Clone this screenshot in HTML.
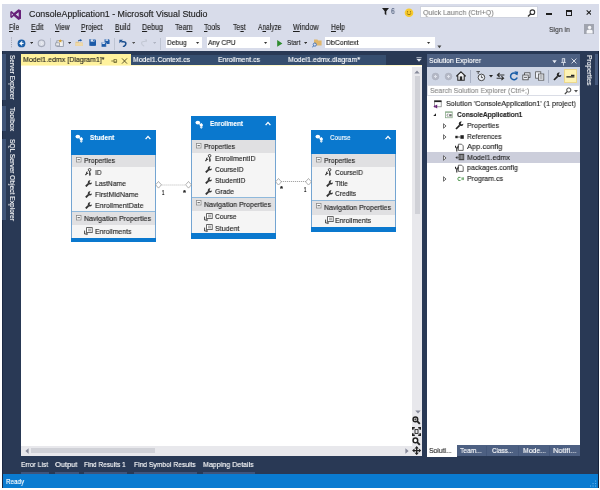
<!DOCTYPE html>
<html><head><meta charset="utf-8"><title>ConsoleApplication1 - Microsoft Visual Studio</title>
<style>
html,body{margin:0;padding:0;background:#fff;}
body{width:600px;height:490px;overflow:hidden;font-family:"Liberation Sans",sans-serif;}
#root{position:relative;width:600px;height:490px;overflow:hidden;background:#fff;}
#root div,#root svg{position:absolute;box-sizing:border-box;}
.t{will-change:transform;-webkit-text-stroke:0.14px;position:absolute;white-space:nowrap;transform-origin:0 50%;font-family:"Liberation Sans",sans-serif;}
.u{text-decoration:underline;}

</style></head>
<body>
<div id="root">
<!-- window chrome -->
<div style="left:2px;top:4px;width:596.5px;height:47px;background:#d8dcea"></div>
<div style="left:2px;top:50.8px;width:596.5px;height:424px;background:#293955"></div>
<div style="left:2px;top:474.2px;width:596.5px;height:14.3px;background:#0a7bd0"></div>

<div style="left:597.8px;top:50.8px;width:0.7px;height:437.7px;background:#17233b"></div>
<div style="left:2px;top:50.8px;width:0.5px;height:437.7px;background:#1b2944"></div>
<!-- VS logo -->
<svg style="left:9.6px;top:8.7px" width="11.9" height="11.1" viewBox="0 0 14 13"><path d="M10 0.2 L13.7 1.8 V11.2 L10 12.8 L4.5 8.2 L1.9 10.6 L0.3 9.8 V3.2 L1.9 2.4 L4.5 4.8 Z M10.2 3.9 L6.8 6.5 L10.2 9.1 Z M2 4.9 V8.1 L3.7 6.5 Z" fill="#68217a" fill-rule="evenodd"/></svg>

<!-- title right: filter, smiley, quick launch, window buttons -->
<svg style="left:381.7px;top:8.3px" width="8" height="8" viewBox="0 0 8 8"><path d="M0 0 H7 L4.3 3.2 V7.2 L2.7 6 V3.2 Z" fill="#1e1e1e"/></svg>
<svg style="left:403.5px;top:7.5px" width="10" height="10" viewBox="0 0 10 10"><circle cx="5" cy="4.8" r="4.3" fill="#f7ca2e"/><circle cx="3.5" cy="3.8" r="0.6" fill="#7a5b00"/><circle cx="6.5" cy="3.8" r="0.6" fill="#7a5b00"/><path d="M2.8 5.6 Q5 8 7.2 5.6" stroke="#7a5b00" stroke-width="0.7" fill="none"/></svg>
<div style="left:419.5px;top:6px;width:118.3px;height:11.8px;background:#fff;border:0.5px solid #cfd3df"></div>
<svg style="left:527px;top:8.5px" width="9" height="9" viewBox="0 0 9 9"><circle cx="5.4" cy="3.2" r="2.3" stroke="#333" stroke-width="1.1" fill="none"/><path d="M3.8 4.8 L1 7.6" stroke="#333" stroke-width="1.4"/></svg>
<div style="left:546px;top:13.3px;width:6px;height:1.8px;background:#1e1e1e"></div>
<div style="left:566.2px;top:9.5px;width:6.1px;height:6.2px;border:0.9px solid #1e1e1e;border-top-width:2.1px"></div>
<svg style="left:585.7px;top:10.4px" width="5.8" height="5" viewBox="0 0 7 6"><path d="M0.8 0.5 L6.2 5.5 M6.2 0.5 L0.8 5.5" stroke="#1e1e1e" stroke-width="1.3"/></svg>
<!-- avatar -->
<svg style="left:583.8px;top:24px" width="10" height="10" viewBox="0 0 10 10"><rect width="10" height="10" fill="#a0a4af"/><circle cx="5.6" cy="3.5" r="1.7" fill="#f4f5f8"/><path d="M2.6 9.5 V7.4 Q2.6 5.6 5.6 5.6 Q8.6 5.6 8.6 7.4 V9.5 Z" fill="#f4f5f8"/></svg>


<!-- toolbar -->
<svg style="left:9.8px;top:37.2px" width="3" height="12" viewBox="0 0 3 12"><g fill="#9aa0b0"><rect x="1" y="0.5" width="1" height="1"/><rect x="1" y="2.7" width="1" height="1"/><rect x="1" y="4.9" width="1" height="1"/><rect x="1" y="7.1" width="1" height="1"/><rect x="1" y="9.3" width="1" height="1"/></g></svg>
<svg style="left:17px;top:38.5px" width="9" height="9" viewBox="0 0 9 9"><circle cx="4.5" cy="4.4" r="3.9" fill="#1b5fa8"/><path d="M5.2 2.4 L3 4.4 L5.2 6.4 M3 4.4 H6.6" stroke="#fff" stroke-width="1.1" fill="none"/></svg>
<svg style="left:29.9px;top:41.8px" width="3.2" height="2.4" viewBox="0 0 4 3"><path d="M0 0 H4 L2 2.4 Z" fill="#333"/></svg>
<svg style="left:37px;top:38.8px" width="9" height="9" viewBox="0 0 9 9"><circle cx="4.5" cy="4.3" r="3.3" fill="#dcdfe8" stroke="#a4a9b8" stroke-width="1.1"/><path d="M4 2.8 L5.6 4.3 L4 5.8" stroke="#eef0f5" stroke-width="0.9" fill="none"/></svg>
<div style="left:50px;top:37.5px;width:1px;height:12px;background:#bec4d2"></div>
<!-- new project -->
<svg style="left:54.6px;top:38.6px" width="9.4" height="8.4" viewBox="0 0 10 10" preserveAspectRatio="none"><rect x="2" y="2.2" width="6.8" height="6.6" fill="#f2f2f2" stroke="#7f8797" stroke-width="0.8"/><rect x="0.8" y="4.6" width="4" height="3.6" fill="#e8e8e8" stroke="#7f8797" stroke-width="0.7"/><path d="M5.6 0.4 L6.3 1.6 L7.6 1.9 L6.6 2.8 L6.8 4.1 L5.6 3.5 L4.4 4.1 L4.6 2.8 L3.6 1.9 L4.9 1.6 Z" fill="#d9a531"/></svg>
<svg style="left:67.9px;top:41.8px" width="3.2" height="2.4" viewBox="0 0 4 3"><path d="M0 0 H4 L2 2.4 Z" fill="#333"/></svg>
<!-- open -->
<svg style="left:75.2px;top:38.6px" width="8.6" height="7.6" viewBox="0 0 10 11" preserveAspectRatio="none"><path d="M0.6 4 H4 L4.8 5 H9 V10 H0.6 Z" fill="#e3c58c"/><path d="M0.6 5.6 H9 V10 H0.6Z" fill="#efd9a8"/><path d="M3.4 3.2 Q3.6 1 6 1.2 V0 L8.4 1.9 L6 3.8 V2.6 Q4.6 2.4 4.6 3.4Z" fill="#1e5aa8"/></svg>
<!-- save -->
<svg style="left:88.8px;top:39.3px" width="7.4" height="7" viewBox="0 0 9 9" preserveAspectRatio="none"><path d="M0.4 0.4 H7.4 L8.6 1.6 V8.6 H0.4 Z" fill="#1d5ba8"/><rect x="2" y="0.4" width="4.6" height="3" fill="#dfe6f3"/><rect x="4.9" y="0.8" width="1" height="2" fill="#1d5ba8"/><rect x="1.8" y="5.4" width="5.4" height="3.2" fill="#1d5ba8"/></svg>
<!-- save all -->
<svg style="left:101px;top:38.6px" width="8.9" height="8.4" viewBox="0 0 11 11" preserveAspectRatio="none"><path d="M4.4 0.4 H9.6 L10.6 1.4 V6.6 H4.4 Z" fill="#1d5ba8"/><rect x="5.6" y="0.4" width="3.2" height="2" fill="#dfe6f3"/><path d="M0.4 4.4 H5.6 L6.6 5.4 V10.6 H0.4 Z" fill="#1d5ba8" stroke="#dde1ec" stroke-width="0.6"/><rect x="1.6" y="4.6" width="3.2" height="2" fill="#dfe6f3"/></svg>
<div style="left:114.4px;top:37.5px;width:1px;height:12px;background:#bec4d2"></div>
<!-- undo -->
<svg style="left:119.2px;top:38.8px" width="8.6" height="8.6" viewBox="0 0 10 10"><path d="M2.6 3.2 H5.2 Q8 3.2 8 5.6 Q8 7.6 4.6 9.2" stroke="#1b4f8f" stroke-width="1.8" fill="none"/><path d="M0.4 0.8 H4.6 L0.4 5 Z" fill="#1b4f8f"/></svg>
<svg style="left:132.2px;top:41.8px" width="3.2" height="2.4" viewBox="0 0 4 3"><path d="M0 0 H4 L2 2.4 Z" fill="#555"/></svg>
<!-- redo -->
<svg style="left:139.6px;top:39px" width="7.8" height="7.8" viewBox="0 0 10 10"><path d="M7.4 3.2 H4.8 Q2 3.2 2 5.6 Q2 7.6 5.4 9.2" stroke="#c3c8d4" stroke-width="1.4" fill="none"/><path d="M9.6 0.8 H5.6 L9.6 4.8 Z" fill="#c3c8d4"/></svg>
<svg style="left:152.6px;top:41.8px" width="3.2" height="2.4" viewBox="0 0 4 3"><path d="M0 0 H4 L2 2.4 Z" fill="#b0b5c3"/></svg>
<div style="left:160px;top:37.5px;width:1px;height:12px;background:#bec4d2"></div>
<!-- combos -->
<div style="left:165.6px;top:36.6px;width:36.4px;height:11.6px;background:#fff"></div>
<svg style="left:196.4px;top:41.8px" width="3.2" height="2.4" viewBox="0 0 4 3"><path d="M0 0 H4 L2 2.4 Z" fill="#333"/></svg>
<div style="left:206.5px;top:36.6px;width:63.5px;height:11.6px;background:#fff"></div>
<svg style="left:264.4px;top:41.8px" width="3.2" height="2.4" viewBox="0 0 4 3"><path d="M0 0 H4 L2 2.4 Z" fill="#333"/></svg>
<svg style="left:277px;top:39.5px" width="6" height="7" viewBox="0 0 6 7"><path d="M0.2 0 L5.4 3.4 L0.2 6.8 Z" fill="#2e8b2e"/></svg>
<svg style="left:304.2px;top:41.8px" width="3.2" height="2.4" viewBox="0 0 4 3"><path d="M0 0 H4 L2 2.4 Z" fill="#333"/></svg>
<!-- find-in-files icon -->
<svg style="left:311.5px;top:38px" width="10" height="10" viewBox="0 0 10 10"><path d="M2 1.6 H5.4 L6.2 2.6 H9.6 V7.4 H2 Z" fill="#e0b66b"/><circle cx="2.8" cy="6.6" r="1.6" stroke="#3d6fb5" stroke-width="0.9" fill="#dde1ec"/><path d="M1.6 7.8 L0.3 9.4" stroke="#3d6fb5" stroke-width="1"/></svg>
<div style="left:324.5px;top:36.6px;width:110.5px;height:11.6px;background:#fff"></div>
<svg style="left:427.4px;top:41.8px" width="3.2" height="2.4" viewBox="0 0 4 3"><path d="M0 0 H4 L2 2.4 Z" fill="#333"/></svg>
<svg style="left:437px;top:44.5px" width="5" height="4" viewBox="0 0 5 4"><path d="M0.4 0.4 H4.4 L2.4 3.2 Z" fill="#444"/></svg>

<!-- left strip indicators -->
<div style="left:2px;top:54.3px;width:4.2px;height:46px;background:#3f5478"></div>
<div style="left:2px;top:106.4px;width:4.2px;height:24.8px;background:#3f5478"></div>
<div style="left:2px;top:139px;width:4.2px;height:81.4px;background:#3f5478"></div>
<!-- right strip indicator -->
<div style="left:595.2px;top:54.3px;width:3.3px;height:31px;background:#465a7d"></div>

<!-- document well -->
<div style="left:130.5px;top:54.5px;width:255.5px;height:10.2px;background:#364e6f"></div>
<div style="left:20.5px;top:54.4px;width:110px;height:10.6px;background:#fff29d"></div>
<div style="left:20.5px;top:64.6px;width:401.8px;height:2px;background:#fff8c8"></div>
<div style="left:20.5px;top:66.3px;width:401.8px;height:389.5px;background:#fff"></div>
<!-- pin + close on active tab -->
<svg style="left:111px;top:57.5px" width="7" height="6" viewBox="0 0 7 6"><path d="M0.3 3 H3 M3 1.2 V4.8 M3 1.6 H5.6 V4 H3 M3 4.4 H5.8" stroke="#6b6430" stroke-width="0.8" fill="none"/></svg>
<svg style="left:120.5px;top:57.5px" width="7" height="6" viewBox="0 0 7 6"><path d="M1 0.4 L6 5.6 M6 0.4 L1 5.6" stroke="#4b4620" stroke-width="0.9"/></svg>
<!-- tab well dropdown -->
<svg style="left:415.6px;top:56.8px" width="6" height="5.6" viewBox="0 0 7 6"><path d="M0.5 0.6 H6.5" stroke="#dfe4ee" stroke-width="1"/><path d="M0.6 2 H6.4 L3.5 5.4 Z" fill="#dfe4ee"/></svg>

<!-- vertical scrollbar -->
<div style="left:412.2px;top:66.5px;width:10.1px;height:389.5px;background:#e8e8ec"></div>
<div style="left:414.7px;top:76px;width:4.9px;height:137.7px;background:#d0d1d7"></div>
<svg style="left:414.4px;top:70.2px" width="6" height="4" viewBox="0 0 6 4"><path d="M0.3 3.6 L3 0.4 L5.7 3.6 Z" fill="#868999"/></svg>
<svg style="left:414.5px;top:409.5px" width="6" height="4" viewBox="0 0 6 4"><path d="M0.3 0.4 L3 3.6 L5.7 0.4 Z" fill="#868999"/></svg>
<!-- zoom icons -->
<svg style="left:411.8px;top:416.3px" width="9" height="9" viewBox="0 0 9 9"><circle cx="3.4" cy="3.4" r="2.3" stroke="#222" stroke-width="1.5" fill="#fff"/><path d="M5.2 5.2 L7.8 7.8" stroke="#222" stroke-width="1.9"/><path d="M2.2 3.4 H4.6 M3.4 2.2 V4.6" stroke="#2b2b2b" stroke-width="0.7"/></svg>
<svg style="left:411.8px;top:426.6px" width="9" height="9" viewBox="0 0 9 9"><path d="M0.8 2.8 V0.8 H2.8 M6.2 0.8 H8.2 V2.8 M8.2 6.2 V8.2 H6.2 M2.8 8.2 H0.8 V6.2" stroke="#222" stroke-width="1.6" fill="none"/><rect x="3" y="2.6" width="3" height="3.8" fill="none" stroke="#222" stroke-width="0.9"/></svg>
<svg style="left:411.8px;top:436.6px" width="9" height="9" viewBox="0 0 9 9"><circle cx="3.4" cy="3.4" r="2.3" stroke="#222" stroke-width="1.5" fill="#fff"/><path d="M5.2 5.2 L7.8 7.8" stroke="#222" stroke-width="1.9"/></svg>
<svg style="left:411.8px;top:446px" width="9.4" height="9.2" viewBox="0 0 10 10"><path d="M5 1.6 V8.4 M1.6 5 H8.4" stroke="#222" stroke-width="1.5"/><path d="M5 0 L7.2 2.6 H2.8 Z M5 10 L7.2 7.4 H2.8 Z M0 5 L2.6 2.8 V7.2 Z M10 5 L7.4 2.8 V7.2 Z" fill="#222"/></svg>
<!-- horizontal scrollbar -->
<div style="left:20.5px;top:446px;width:391.8px;height:10px;background:#e8e8ec"></div>
<div style="left:31px;top:448.2px;width:124px;height:5.2px;background:#d0d1d7"></div>
<svg style="left:24.5px;top:448px" width="4" height="6" viewBox="0 0 4 6"><path d="M3.6 0.3 L0.4 3 L3.6 5.7 Z" fill="#868999"/></svg>
<svg style="left:404.5px;top:448px" width="4" height="6" viewBox="0 0 4 6"><path d="M0.4 0.3 L3.6 3 L0.4 5.7 Z" fill="#868999"/></svg>

<!-- Solution Explorer -->
<div style="left:426.7px;top:54.4px;width:153.2px;height:12.8px;background:#4d6082"></div>
<div style="left:426.7px;top:67.1px;width:153.2px;height:18px;background:#cfd6e5"></div>
<div style="left:426.7px;top:85px;width:153.2px;height:359.7px;background:#fff"></div>
<div style="left:426.7px;top:85px;width:153.2px;height:10.6px;background:#fff;border:0.6px solid #dadde6"></div>
<div style="left:426.7px;top:152.3px;width:153.2px;height:10.7px;background:#cccedb"></div>
<div style="left:456px;top:444.7px;width:123.9px;height:11.6px;background:#4d6082"></div>
<div style="left:426.7px;top:444.7px;width:29.9px;height:12.3px;background:#fff"></div>
<div style="left:486px;top:446px;width:0.6px;height:10px;background:#44577a"></div>
<div style="left:517.5px;top:446px;width:0.6px;height:10px;background:#44577a"></div>
<div style="left:549px;top:446px;width:0.6px;height:10px;background:#44577a"></div>
<!-- SE header icons -->
<svg style="left:551.5px;top:59.5px" width="5" height="4" viewBox="0 0 5 4"><path d="M0.3 0.3 H4.7 L2.5 3.2 Z" fill="#e6eaf3"/></svg>
<svg style="left:561px;top:57.5px" width="5" height="8" viewBox="0 0 5 8"><path d="M1.3 0.5 V4.4 M3.7 0.5 V4.4 M1.3 0.6 H3.7 M0.2 4.5 H4.8 M2.5 4.5 V7.6 M3.2 0.6 V4.4" stroke="#e6eaf3" stroke-width="0.8" fill="none"/></svg>
<svg style="left:570.5px;top:58px" width="6" height="6" viewBox="0 0 6 6"><path d="M0.6 0.6 L5.4 5.4 M5.4 0.6 L0.6 5.4" stroke="#e6eaf3" stroke-width="0.9"/></svg>
<!-- SE toolbar icons -->
<svg style="left:430.5px;top:71.5px" width="9" height="9" viewBox="0 0 9 9"><circle cx="4.5" cy="4.5" r="3.4" fill="#b4b8c5" stroke="#a9aebd" stroke-width="0.6"/><path d="M5 3 L3.4 4.5 L5 6 M3.4 4.5 H6" stroke="#e4e8f1" stroke-width="0.9" fill="none"/></svg>
<svg style="left:443.5px;top:71.5px" width="9" height="9" viewBox="0 0 9 9"><circle cx="4.5" cy="4.5" r="3.4" fill="#b4b8c5" stroke="#a9aebd" stroke-width="0.6"/><path d="M4 3 L5.6 4.5 L4 6 M5.6 4.5 H3" stroke="#e4e8f1" stroke-width="0.9" fill="none"/></svg>
<svg style="left:456px;top:70.5px" width="10" height="10" viewBox="0 0 10 10"><path d="M5 0.8 L9.4 5 H8.2 V9.2 H1.8 V5 H0.6 Z" fill="#f4f5f8" stroke="#2a2a2a" stroke-width="1.1"/><rect x="3.8" y="5.4" width="2.4" height="3.8" fill="#2a2a2a"/></svg>
<div style="left:469.7px;top:70px;width:0.8px;height:12.5px;background:#a9b1c4"></div>
<svg style="left:475.5px;top:70.5px" width="10" height="11" viewBox="0 0 10 11"><circle cx="5.4" cy="6.4" r="3.3" fill="#eef1f7" stroke="#333" stroke-width="0.9"/><path d="M5.4 4.4 V6.6 H7" stroke="#333" stroke-width="0.8" fill="none"/><path d="M0.4 0.6 H4 M2.2 0.6 V3" stroke="#333" stroke-width="0.8"/></svg>
<svg style="left:488.5px;top:74.5px" width="4" height="3" viewBox="0 0 4 3"><path d="M0 0 H4 L2 2.4 Z" fill="#222"/></svg>
<svg style="left:496px;top:71.5px" width="9" height="9" viewBox="0 0 9 9"><path d="M8.4 3 H2 M3.6 1 L1.4 3 L3.6 5" stroke="#333" stroke-width="1.1" fill="none"/><path d="M0.6 6.2 H7 M5.4 4.2 L7.6 6.2 L5.4 8.2" stroke="#333" stroke-width="1.1" fill="none"/></svg>
<svg style="left:508.5px;top:70.8px" width="10" height="10" viewBox="0 0 10 10"><path d="M7.9 3.6 A3.4 3.4 0 1 0 8.2 6.4" stroke="#1b5fa8" stroke-width="1.5" fill="none"/><path d="M5.4 0.2 L9.2 0.8 L8.4 4.6 Z" fill="#1b5fa8"/></svg>
<svg style="left:522px;top:71.5px" width="9" height="9" viewBox="0 0 9 9"><rect x="2.6" y="0.8" width="5.4" height="4.6" fill="#eef1f7" stroke="#444" stroke-width="0.8"/><rect x="0.8" y="3" width="5.4" height="4.8" fill="#eef1f7" stroke="#444" stroke-width="0.8"/><path d="M2 5.4 H5" stroke="#444" stroke-width="0.8"/></svg>
<svg style="left:534.5px;top:71px" width="10" height="10" viewBox="0 0 10 10"><rect x="0.6" y="0.8" width="5.2" height="6.4" fill="#eef1f7" stroke="#555" stroke-width="0.8"/><rect x="3.4" y="3" width="5.4" height="6.2" fill="#eef1f7" stroke="#555" stroke-width="0.8"/><path d="M4.6 5 H7.6 M4.6 7 H7.6" stroke="#555" stroke-width="0.7"/></svg>
<div style="left:548px;top:70px;width:0.8px;height:12.5px;background:#a9b1c4"></div>
<svg style="left:552.5px;top:71.5px" width="9" height="9" viewBox="0 0 9 9"><path d="M1 8 L4.6 4.4" stroke="#222" stroke-width="1.7"/><path d="M6.8 0.6 A2.3 2.3 0 1 0 8.4 2.8 L6.6 3.6 L5.6 2.6 Z" fill="#222"/></svg>
<div style="left:564px;top:68.8px;width:12.8px;height:14.2px;background:#fdf3b4;border:0.5px solid #ecd88c"></div>
<svg style="left:566px;top:73.5px" width="9" height="5" viewBox="0 0 9 5"><path d="M0.4 2.8 H8.4 M5 1.4 H8.4" stroke="#222" stroke-width="1.3"/></svg>
<!-- search icons -->
<svg style="left:563.5px;top:86.5px" width="8" height="8" viewBox="0 0 8 8"><circle cx="4.8" cy="3" r="2.1" stroke="#444" stroke-width="1" fill="none"/><path d="M3.3 4.5 L0.8 7.2" stroke="#444" stroke-width="1.2"/></svg>
<svg style="left:574px;top:90px" width="4" height="3" viewBox="0 0 4 3"><path d="M0 0 H4 L2 2.4 Z" fill="#555"/></svg>
<!-- tree icons -->
<!-- solution -->
<svg style="left:433.2px;top:99.6px" width="9" height="9" viewBox="0 0 9 9"><rect x="1.6" y="0.8" width="6.6" height="6" fill="#fff" stroke="#777" stroke-width="0.7"/><path d="M1.3 1.3 H8.5" stroke="#222" stroke-width="1.6"/><path d="M0.4 6.4 L2.2 5 V7.8 Z M4.2 4.6 V8.4 L2.4 7.6 V5.4Z" fill="#68217a"/></svg>
<!-- project expand arrow -->
<svg style="left:433.2px;top:113.2px" width="3.4" height="3.4" viewBox="0 0 5 5"><path d="M4.4 0.4 V4.4 H0.4 Z" fill="#222"/></svg>
<svg style="left:445.2px;top:111.3px" width="7.8" height="7.6" viewBox="0 0 9 9"><rect x="0.6" y="1" width="7.8" height="7" fill="#fff" stroke="#86a886" stroke-width="0.9"/><path d="M0.6 1.6 H8.4" stroke="#86a886" stroke-width="1"/><path d="M4 3.6 Q2.2 3.4 2.2 5 Q2.2 6.6 4 6.4 M5.6 3.6 V6.6 M7 3.6 V6.6 M5 4.6 H7.6 M5 5.6 H7.6" stroke="#333" stroke-width="0.6" fill="none"/></svg>
<!-- collapsed arrows -->
<svg style="left:443px;top:122.8px" width="3.6" height="6" viewBox="0 0 4 6"><path d="M0.5 0.5 L3.4 3 L0.5 5.5 Z" fill="#fff" stroke="#333" stroke-width="0.8"/></svg>
<svg style="left:443px;top:133.6px" width="3.6" height="6" viewBox="0 0 4 6"><path d="M0.5 0.5 L3.4 3 L0.5 5.5 Z" fill="#fff" stroke="#333" stroke-width="0.8"/></svg>
<svg style="left:443px;top:154.8px" width="3.6" height="6" viewBox="0 0 4 6"><path d="M0.5 0.5 L3.4 3 L0.5 5.5 Z" fill="#fff" stroke="#333" stroke-width="0.8"/></svg>
<svg style="left:443px;top:175.8px" width="3.6" height="6" viewBox="0 0 4 6"><path d="M0.5 0.5 L3.4 3 L0.5 5.5 Z" fill="#fff" stroke="#333" stroke-width="0.8"/></svg>
<!-- properties wrench -->
<svg style="left:455px;top:121.4px" width="9" height="9" viewBox="0 0 9 9"><path d="M1 8 L4.6 4.4" stroke="#222" stroke-width="1.7"/><path d="M6.8 0.6 A2.3 2.3 0 1 0 8.4 2.8 L6.6 3.6 L5.6 2.6 Z" fill="#222"/></svg>
<!-- references -->
<svg style="left:455px;top:133.6px" width="9" height="6" viewBox="0 0 9 6"><rect x="0.3" y="1.8" width="2.4" height="2.4" fill="#222"/><rect x="5.4" y="1.2" width="3.4" height="3.6" fill="#222"/><path d="M2.7 3 H5.4" stroke="#222" stroke-width="0.7"/></svg>
<!-- config files -->
<svg style="left:455px;top:142.8px" width="9" height="9" viewBox="0 0 9 9"><path d="M3.4 1.2 H6.6 L8.2 2.8 V7.4 H3.4 Z" fill="#fff" stroke="#444" stroke-width="0.8"/><path d="M0.5 2.8 Q0.4 5 1.8 5 Q3.2 5 3 2.8 M1.8 5 V8.6" stroke="#222" stroke-width="1.1" fill="none"/></svg>
<svg style="left:455px;top:163.6px" width="9" height="9" viewBox="0 0 9 9"><path d="M3.4 1.2 H6.6 L8.2 2.8 V7.4 H3.4 Z" fill="#fff" stroke="#444" stroke-width="0.8"/><path d="M0.5 2.8 Q0.4 5 1.8 5 Q3.2 5 3 2.8 M1.8 5 V8.6" stroke="#222" stroke-width="1.1" fill="none"/></svg>
<!-- edmx -->
<svg style="left:454.5px;top:153.2px" width="10" height="9" viewBox="0 0 10 9"><path d="M0.4 4.6 L2.4 3 V6.2 Z" fill="#333"/><rect x="3.6" y="0.8" width="5.6" height="6.4" fill="#444"/><path d="M5 2 V6 M6.4 2 V6 M7.8 2 V6" stroke="#ccced8" stroke-width="0.6"/><path d="M2.4 4.6 H3.6" stroke="#333" stroke-width="0.8"/></svg>
<!-- C# -->
<svg style="left:456.5px;top:175.6px" width="8" height="5.8" viewBox="0 0 10 7"><path d="M4.4 1.6 Q1 0.6 1 3.5 Q1 6.4 4.4 5.4" stroke="#3a8a3a" stroke-width="1.1" fill="none"/><path d="M6.4 1.4 V5 M8 1.4 V5 M5.6 2.6 H8.8 M5.6 3.9 H8.8" stroke="#3a8a3a" stroke-width="0.6"/></svg>
<!-- bottom tool-tab underlines -->
<div style="left:20.5px;top:472px;width:28.5px;height:2.4px;background:#40547a"></div>
<div style="left:54.5px;top:472px;width:24px;height:2.4px;background:#40547a"></div>
<div style="left:84px;top:472px;width:43px;height:2.4px;background:#40547a"></div>
<div style="left:133.5px;top:472px;width:63px;height:2.4px;background:#40547a"></div>
<div style="left:202.5px;top:472px;width:52px;height:2.4px;background:#40547a"></div>
<!-- status grip -->
<svg style="left:589px;top:479.5px" width="8" height="8" viewBox="0 0 8 8"><g fill="#5fb0ea"><rect x="6" y="0.5" width="1.1" height="1.1"/><rect x="6" y="3" width="1.1" height="1.1"/><rect x="6" y="5.5" width="1.1" height="1.1"/><rect x="3.5" y="3" width="1.1" height="1.1"/><rect x="3.5" y="5.5" width="1.1" height="1.1"/><rect x="1" y="5.5" width="1.1" height="1.1"/></g></svg>
<div style="left:71.00px;top:130.00px;width:85.10px;height:111.50px;background:#0a78ce;"></div>
<div style="left:71.00px;top:154.60px;width:85.10px;height:83.20px;background:#74a5d2;"></div>
<div style="left:72.20px;top:154.60px;width:82.70px;height:83.20px;background:#f5f5f5;"></div>
<div style="left:72.20px;top:154.60px;width:82.70px;height:12.60px;background:#e0e0e2;"></div>
<div style="left:72.20px;top:212.00px;width:82.70px;height:13.00px;background:#e0e0e2;"></div>
<div style="left:72.20px;top:211.40px;width:82.70px;height:0.90px;background:#8fb9dc;"></div>
<svg style="left:74.50px;top:133.30px" width="8" height="10" viewBox="0 0 8 10"><ellipse cx="2.8" cy="3.6" rx="2.3" ry="1.9" fill="#fff"/><path d="M4 4.6 L5.8 5.8" stroke="#fff" stroke-width="1.1"/><rect x="4.8" y="4.8" width="3" height="2.8" rx="0.9" fill="#fff"/><path d="M6.3 4 V9 M5.3 8.2 L6.3 9.4 L7.3 8.2" stroke="#fff" stroke-width="0.9" fill="none"/></svg>
<svg style="left:145.00px;top:135.30px" width="6" height="6" viewBox="0 0 6 6"><path d="M0.6 4.2 L3 1.4 L5.4 4.2" stroke="#fff" stroke-width="1.3" fill="none"/></svg>
<svg style="left:76.00px;top:156.90px" width="6" height="6" viewBox="0 0 6 6"><rect x="0.4" y="0.4" width="4.6" height="4.6" fill="#fdfdfd" stroke="#858585" stroke-width="0.75"/><path d="M1.5 2.7 H3.9" stroke="#444" stroke-width="0.9"/></svg>
<svg style="left:76.00px;top:214.70px" width="6" height="6" viewBox="0 0 6 6"><rect x="0.4" y="0.4" width="4.6" height="4.6" fill="#fdfdfd" stroke="#858585" stroke-width="0.75"/><path d="M1.5 2.7 H3.9" stroke="#444" stroke-width="0.9"/></svg>
<svg style="left:84.90px;top:168.20px" width="7" height="8" viewBox="0 0 7 8"><circle cx="4.6" cy="1.8" r="1.3" stroke="#333" stroke-width="0.9" fill="none"/><path d="M4.6 3 V7.6 M4.6 5.2 H6 M4.6 6.8 H6" stroke="#333" stroke-width="0.9" fill="none"/><path d="M0.4 7 L2.2 5.2" stroke="#333" stroke-width="1.1"/><path d="M2.8 3.6 A1.2 1.2 0 1 0 3.4 5 L2.6 5.2 L2.2 4.6Z" fill="#333"/></svg>
<svg style="left:85.40px;top:179.80px" width="7" height="7" viewBox="0 0 7 7"><path d="M0.8 6.4 L3.6 3.6" stroke="#333" stroke-width="1.9"/><path d="M5.5 0.3 A2.1 2.1 0 1 0 7 2.5 L5.3 3.1 L4.4 2.2 Z" fill="#333"/></svg>
<svg style="left:85.40px;top:190.80px" width="7" height="7" viewBox="0 0 7 7"><path d="M0.8 6.4 L3.6 3.6" stroke="#333" stroke-width="1.9"/><path d="M5.5 0.3 A2.1 2.1 0 1 0 7 2.5 L5.3 3.1 L4.4 2.2 Z" fill="#333"/></svg>
<svg style="left:85.40px;top:201.80px" width="7" height="7" viewBox="0 0 7 7"><path d="M0.8 6.4 L3.6 3.6" stroke="#333" stroke-width="1.9"/><path d="M5.5 0.3 A2.1 2.1 0 1 0 7 2.5 L5.3 3.1 L4.4 2.2 Z" fill="#333"/></svg>
<svg style="left:84.40px;top:226.80px" width="9" height="9" viewBox="0 0 9 9"><rect x="2.6" y="0.6" width="5.6" height="5" fill="#fff" stroke="#444" stroke-width="0.8"/><path d="M4 2.2 H7 M4 3.8 H7" stroke="#444" stroke-width="0.6"/><path d="M0.6 3.6 V7 H3.2" stroke="#333" stroke-width="0.9" fill="none"/><path d="M2.6 5.8 L4 7 L2.6 8.2Z" fill="#333"/></svg>
<div style="left:191.00px;top:116.20px;width:85.10px;height:122.60px;background:#0a78ce;"></div>
<div style="left:191.00px;top:140.20px;width:85.10px;height:93.10px;background:#74a5d2;"></div>
<div style="left:192.20px;top:140.20px;width:82.70px;height:93.10px;background:#f5f5f5;"></div>
<div style="left:192.20px;top:140.20px;width:82.70px;height:12.60px;background:#e0e0e2;"></div>
<div style="left:192.20px;top:197.50px;width:82.70px;height:13.80px;background:#e0e0e2;"></div>
<div style="left:192.20px;top:196.90px;width:82.70px;height:0.90px;background:#8fb9dc;"></div>
<svg style="left:194.50px;top:118.80px" width="8" height="10" viewBox="0 0 8 10"><ellipse cx="2.8" cy="3.6" rx="2.3" ry="1.9" fill="#fff"/><path d="M4 4.6 L5.8 5.8" stroke="#fff" stroke-width="1.1"/><rect x="4.8" y="4.8" width="3" height="2.8" rx="0.9" fill="#fff"/><path d="M6.3 4 V9 M5.3 8.2 L6.3 9.4 L7.3 8.2" stroke="#fff" stroke-width="0.9" fill="none"/></svg>
<svg style="left:265.00px;top:120.80px" width="6" height="6" viewBox="0 0 6 6"><path d="M0.6 4.2 L3 1.4 L5.4 4.2" stroke="#fff" stroke-width="1.3" fill="none"/></svg>
<svg style="left:196.00px;top:142.50px" width="6" height="6" viewBox="0 0 6 6"><rect x="0.4" y="0.4" width="4.6" height="4.6" fill="#fdfdfd" stroke="#858585" stroke-width="0.75"/><path d="M1.5 2.7 H3.9" stroke="#444" stroke-width="0.9"/></svg>
<svg style="left:196.00px;top:200.20px" width="6" height="6" viewBox="0 0 6 6"><rect x="0.4" y="0.4" width="4.6" height="4.6" fill="#fdfdfd" stroke="#858585" stroke-width="0.75"/><path d="M1.5 2.7 H3.9" stroke="#444" stroke-width="0.9"/></svg>
<svg style="left:204.90px;top:154.20px" width="7" height="8" viewBox="0 0 7 8"><circle cx="4.6" cy="1.8" r="1.3" stroke="#333" stroke-width="0.9" fill="none"/><path d="M4.6 3 V7.6 M4.6 5.2 H6 M4.6 6.8 H6" stroke="#333" stroke-width="0.9" fill="none"/><path d="M0.4 7 L2.2 5.2" stroke="#333" stroke-width="1.1"/><path d="M2.8 3.6 A1.2 1.2 0 1 0 3.4 5 L2.6 5.2 L2.2 4.6Z" fill="#333"/></svg>
<svg style="left:205.40px;top:165.80px" width="7" height="7" viewBox="0 0 7 7"><path d="M0.8 6.4 L3.6 3.6" stroke="#333" stroke-width="1.9"/><path d="M5.5 0.3 A2.1 2.1 0 1 0 7 2.5 L5.3 3.1 L4.4 2.2 Z" fill="#333"/></svg>
<svg style="left:205.40px;top:176.80px" width="7" height="7" viewBox="0 0 7 7"><path d="M0.8 6.4 L3.6 3.6" stroke="#333" stroke-width="1.9"/><path d="M5.5 0.3 A2.1 2.1 0 1 0 7 2.5 L5.3 3.1 L4.4 2.2 Z" fill="#333"/></svg>
<svg style="left:205.40px;top:187.80px" width="7" height="7" viewBox="0 0 7 7"><path d="M0.8 6.4 L3.6 3.6" stroke="#333" stroke-width="1.9"/><path d="M5.5 0.3 A2.1 2.1 0 1 0 7 2.5 L5.3 3.1 L4.4 2.2 Z" fill="#333"/></svg>
<svg style="left:204.40px;top:212.80px" width="9" height="9" viewBox="0 0 9 9"><rect x="2.6" y="0.6" width="5.6" height="5" fill="#fff" stroke="#444" stroke-width="0.8"/><path d="M4 2.2 H7 M4 3.8 H7" stroke="#444" stroke-width="0.6"/><path d="M0.6 3.6 V7 H3.2" stroke="#333" stroke-width="0.9" fill="none"/><path d="M2.6 5.8 L4 7 L2.6 8.2Z" fill="#333"/></svg>
<svg style="left:204.40px;top:224.20px" width="9" height="9" viewBox="0 0 9 9"><rect x="2.6" y="0.6" width="5.6" height="5" fill="#fff" stroke="#444" stroke-width="0.8"/><path d="M4 2.2 H7 M4 3.8 H7" stroke="#444" stroke-width="0.6"/><path d="M0.6 3.6 V7 H3.2" stroke="#333" stroke-width="0.9" fill="none"/><path d="M2.6 5.8 L4 7 L2.6 8.2Z" fill="#333"/></svg>
<div style="left:311.00px;top:130.00px;width:84.80px;height:102.00px;background:#0a78ce;"></div>
<div style="left:311.00px;top:154.20px;width:84.80px;height:72.80px;background:#74a5d2;"></div>
<div style="left:312.20px;top:154.20px;width:82.40px;height:72.80px;background:#f5f5f5;"></div>
<div style="left:312.20px;top:154.20px;width:82.40px;height:13.00px;background:#e0e0e2;"></div>
<div style="left:312.20px;top:200.30px;width:82.40px;height:14.30px;background:#e0e0e2;"></div>
<div style="left:312.20px;top:199.70px;width:82.40px;height:0.90px;background:#8fb9dc;"></div>
<svg style="left:314.50px;top:133.30px" width="8" height="10" viewBox="0 0 8 10"><ellipse cx="2.8" cy="3.6" rx="2.3" ry="1.9" fill="#fff"/><path d="M4 4.6 L5.8 5.8" stroke="#fff" stroke-width="1.1"/><rect x="4.8" y="4.8" width="3" height="2.8" rx="0.9" fill="#fff"/><path d="M6.3 4 V9 M5.3 8.2 L6.3 9.4 L7.3 8.2" stroke="#fff" stroke-width="0.9" fill="none"/></svg>
<svg style="left:385.00px;top:135.30px" width="6" height="6" viewBox="0 0 6 6"><path d="M0.6 4.2 L3 1.4 L5.4 4.2" stroke="#fff" stroke-width="1.3" fill="none"/></svg>
<svg style="left:316.00px;top:156.50px" width="6" height="6" viewBox="0 0 6 6"><rect x="0.4" y="0.4" width="4.6" height="4.6" fill="#fdfdfd" stroke="#858585" stroke-width="0.75"/><path d="M1.5 2.7 H3.9" stroke="#444" stroke-width="0.9"/></svg>
<svg style="left:316.00px;top:203.00px" width="6" height="6" viewBox="0 0 6 6"><rect x="0.4" y="0.4" width="4.6" height="4.6" fill="#fdfdfd" stroke="#858585" stroke-width="0.75"/><path d="M1.5 2.7 H3.9" stroke="#444" stroke-width="0.9"/></svg>
<svg style="left:325.40px;top:168.40px" width="7" height="8" viewBox="0 0 7 8"><circle cx="4.6" cy="1.8" r="1.3" stroke="#333" stroke-width="0.9" fill="none"/><path d="M4.6 3 V7.6 M4.6 5.2 H6 M4.6 6.8 H6" stroke="#333" stroke-width="0.9" fill="none"/><path d="M0.4 7 L2.2 5.2" stroke="#333" stroke-width="1.1"/><path d="M2.8 3.6 A1.2 1.2 0 1 0 3.4 5 L2.6 5.2 L2.2 4.6Z" fill="#333"/></svg>
<svg style="left:325.90px;top:180.00px" width="7" height="7" viewBox="0 0 7 7"><path d="M0.8 6.4 L3.6 3.6" stroke="#333" stroke-width="1.9"/><path d="M5.5 0.3 A2.1 2.1 0 1 0 7 2.5 L5.3 3.1 L4.4 2.2 Z" fill="#333"/></svg>
<svg style="left:325.90px;top:190.40px" width="7" height="7" viewBox="0 0 7 7"><path d="M0.8 6.4 L3.6 3.6" stroke="#333" stroke-width="1.9"/><path d="M5.5 0.3 A2.1 2.1 0 1 0 7 2.5 L5.3 3.1 L4.4 2.2 Z" fill="#333"/></svg>
<svg style="left:324.90px;top:216.30px" width="9" height="9" viewBox="0 0 9 9"><rect x="2.6" y="0.6" width="5.6" height="5" fill="#fff" stroke="#444" stroke-width="0.8"/><path d="M4 2.2 H7 M4 3.8 H7" stroke="#444" stroke-width="0.6"/><path d="M0.6 3.6 V7 H3.2" stroke="#333" stroke-width="0.9" fill="none"/><path d="M2.6 5.8 L4 7 L2.6 8.2Z" fill="#333"/></svg>
<svg style="left:156px;top:178px" width="36" height="12" viewBox="0 0 36 12"><path d="M5.5 7 H29.5" stroke="#909090" stroke-width="0.55" stroke-dasharray="1.2 0.8" fill="none"/></svg>
<svg style="left:155.40px;top:181.10px" width="7" height="7.6" viewBox="0 0 7 7.6"><path d="M0.6 3.8 L3.5 0.5 L6.4 3.8 L3.5 7.1 Z" fill="#fff" stroke="#8f8f8f" stroke-width="0.7"/></svg>
<svg style="left:184.70px;top:181.10px" width="7" height="7.6" viewBox="0 0 7 7.6"><path d="M0.6 3.8 L3.5 0.5 L6.4 3.8 L3.5 7.1 Z" fill="#fff" stroke="#8f8f8f" stroke-width="0.7"/></svg>
<svg style="left:276px;top:175px" width="36" height="12" viewBox="0 0 36 12"><path d="M5 6.5 H30" stroke="#6a6a6a" stroke-width="0.6" stroke-dasharray="1.2 0.8" fill="none"/></svg>
<svg style="left:274.50px;top:177.70px" width="7" height="7.6" viewBox="0 0 7 7.6"><path d="M0.6 3.8 L3.5 0.5 L6.4 3.8 L3.5 7.1 Z" fill="#fff" stroke="#8f8f8f" stroke-width="0.7"/></svg>
<svg style="left:304.70px;top:177.70px" width="7" height="7.6" viewBox="0 0 7 7.6"><path d="M0.6 3.8 L3.5 0.5 L6.4 3.8 L3.5 7.1 Z" fill="#fff" stroke="#8f8f8f" stroke-width="0.7"/></svg>

<span class="t" id="t0" style="left:29px;top:10.32px;font-size:8.3px;line-height:9.96px;color:#1e1e1e;font-weight:400;transform:scaleX(1.0672);">ConsoleApplication1 - Microsoft Visual Studio</span>
<span class="t" id="t1" style="left:391px;top:6.68px;font-size:8.2px;line-height:9.84px;color:#55637f;font-weight:400;transform:scaleX(0.8329);">6</span>
<span class="t" id="t2" style="left:422.5px;top:7.70px;font-size:8px;line-height:9.60px;color:#7d7d7d;font-weight:400;-webkit-text-stroke:0.1px;transform:scaleX(0.8833);">Quick Launch (Ctrl+Q)</span>
<span class="t" id="t3" style="left:9px;top:23.38px;font-size:8.2px;line-height:9.84px;color:#1e1e1e;font-weight:400;transform:scaleX(0.7565);"><u>F</u>ile</span>
<span class="t" id="t4" style="left:30.5px;top:23.38px;font-size:8.2px;line-height:9.84px;color:#1e1e1e;font-weight:400;transform:scaleX(0.8850);"><u>E</u>dit</span>
<span class="t" id="t5" style="left:54.5px;top:23.38px;font-size:8.2px;line-height:9.84px;color:#1e1e1e;font-weight:400;transform:scaleX(0.8227);"><u>V</u>iew</span>
<span class="t" id="t6" style="left:81px;top:23.38px;font-size:8.2px;line-height:9.84px;color:#1e1e1e;font-weight:400;transform:scaleX(0.8431);"><u>P</u>roject</span>
<span class="t" id="t7" style="left:114.6px;top:23.38px;font-size:8.2px;line-height:9.84px;color:#1e1e1e;font-weight:400;transform:scaleX(0.8453);"><u>B</u>uild</span>
<span class="t" id="t8" style="left:142px;top:23.38px;font-size:8.2px;line-height:9.84px;color:#1e1e1e;font-weight:400;transform:scaleX(0.8699);"><u>D</u>ebug</span>
<span class="t" id="t9" style="left:174.6px;top:23.38px;font-size:8.2px;line-height:9.84px;color:#1e1e1e;font-weight:400;transform:scaleX(0.8686);">Tea<u>m</u></span>
<span class="t" id="t10" style="left:204.4px;top:23.38px;font-size:8.2px;line-height:9.84px;color:#1e1e1e;font-weight:400;transform:scaleX(0.8366);"><u>T</u>ools</span>
<span class="t" id="t11" style="left:233px;top:23.38px;font-size:8.2px;line-height:9.84px;color:#1e1e1e;font-weight:400;transform:scaleX(0.8383);">Te<u>s</u>t</span>
<span class="t" id="t12" style="left:257.6px;top:23.38px;font-size:8.2px;line-height:9.84px;color:#1e1e1e;font-weight:400;transform:scaleX(0.8026);">A<u>n</u>alyze</span>
<span class="t" id="t13" style="left:293.4px;top:23.38px;font-size:8.2px;line-height:9.84px;color:#1e1e1e;font-weight:400;transform:scaleX(0.8785);"><u>W</u>indow</span>
<span class="t" id="t14" style="left:331px;top:23.38px;font-size:8.2px;line-height:9.84px;color:#1e1e1e;font-weight:400;transform:scaleX(0.8304);"><u>H</u>elp</span>
<span class="t" id="t15" style="left:548.8px;top:24.60px;font-size:8px;line-height:9.60px;color:#333;font-weight:400;-webkit-text-stroke:0.1px;transform:scaleX(0.8542);">Sign in</span>
<span class="t" id="t16" style="left:167.4px;top:38.00px;font-size:8px;line-height:9.60px;color:#1e1e1e;font-weight:400;transform:scaleX(0.8313);">Debug</span>
<span class="t" id="t17" style="left:208.4px;top:38.00px;font-size:8px;line-height:9.60px;color:#1e1e1e;font-weight:400;transform:scaleX(0.8387);">Any CPU</span>
<span class="t" id="t18" style="left:286.6px;top:38.00px;font-size:8px;line-height:9.60px;color:#1e1e1e;font-weight:400;transform:scaleX(0.7926);">Start</span>
<span class="t" id="t19" style="left:326.4px;top:38.00px;font-size:8px;line-height:9.60px;color:#1e1e1e;font-weight:400;transform:scaleX(0.8625);">DbContext</span>
<span class="t" id="t20" style="left:23px;top:55.30px;font-size:8px;line-height:9.60px;color:#1e1e1e;font-weight:400;transform:scaleX(0.8812);">Model1.edmx [Diagram1]*</span>
<span class="t" id="t21" style="left:133px;top:55.30px;font-size:8px;line-height:9.60px;color:#fff;font-weight:400;transform:scaleX(0.8602);">Model1.Context.cs</span>
<span class="t" id="t22" style="left:218px;top:55.30px;font-size:8px;line-height:9.60px;color:#fff;font-weight:400;transform:scaleX(0.8665);">Enrollment.cs</span>
<span class="t" id="t23" style="left:288px;top:55.30px;font-size:8px;line-height:9.60px;color:#fff;font-weight:400;transform:scaleX(0.8752);">Model1.edmx.diagram*</span>
<span class="t" id="t24" style="left:429px;top:56.34px;font-size:8.1px;line-height:9.72px;color:#fff;font-weight:400;transform:scaleX(0.8436);">Solution Explorer</span>
<span class="t" id="t25" style="left:429.7px;top:85.60px;font-size:8px;line-height:9.60px;color:#858585;font-weight:400;-webkit-text-stroke:0.1px;transform:scaleX(0.8606);">Search Solution Explorer (Ctrl+;)</span>
<span class="t" id="t26" style="left:446px;top:99.20px;font-size:8px;line-height:9.60px;color:#1e1e1e;font-weight:400;transform:scaleX(0.8930);">Solution &#x27;ConsoleApplication1&#x27; (1 project)</span>
<span class="t" id="t27" style="left:457px;top:110.20px;font-size:8px;line-height:9.60px;color:#1e1e1e;font-weight:700;transform:scaleX(0.8220);">ConsoleApplication1</span>
<span class="t" id="t28" style="left:467px;top:120.80px;font-size:8px;line-height:9.60px;color:#1e1e1e;font-weight:400;transform:scaleX(0.8775);">Properties</span>
<span class="t" id="t29" style="left:467px;top:131.60px;font-size:8px;line-height:9.60px;color:#1e1e1e;font-weight:400;transform:scaleX(0.8406);">References</span>
<span class="t" id="t30" style="left:467px;top:142.40px;font-size:8px;line-height:9.60px;color:#1e1e1e;font-weight:400;transform:scaleX(0.9362);">App.config</span>
<span class="t" id="t31" style="left:467px;top:152.80px;font-size:8px;line-height:9.60px;color:#1e1e1e;font-weight:400;transform:scaleX(0.8953);">Model1.edmx</span>
<span class="t" id="t32" style="left:467px;top:163.20px;font-size:8px;line-height:9.60px;color:#1e1e1e;font-weight:400;transform:scaleX(0.8819);">packages.config</span>
<span class="t" id="t33" style="left:467px;top:173.80px;font-size:8px;line-height:9.60px;color:#1e1e1e;font-weight:400;transform:scaleX(0.8801);">Program.cs</span>
<span class="t" id="t34" style="left:429.4px;top:445.50px;font-size:8px;line-height:9.60px;color:#1e1e1e;font-weight:400;transform:scaleX(0.8543);">Soluti...</span>
<span class="t" id="t35" style="left:460px;top:445.50px;font-size:8px;line-height:9.60px;color:#fff;font-weight:400;transform:scaleX(0.8272);">Team...</span>
<span class="t" id="t36" style="left:491.7px;top:445.50px;font-size:8px;line-height:9.60px;color:#fff;font-weight:400;transform:scaleX(0.7873);">Class...</span>
<span class="t" id="t37" style="left:522.7px;top:445.50px;font-size:8px;line-height:9.60px;color:#fff;font-weight:400;transform:scaleX(0.8618);">Mode...</span>
<span class="t" id="t38" style="left:552.7px;top:445.50px;font-size:8px;line-height:9.60px;color:#fff;font-weight:400;transform:scaleX(0.9355);">Notifi...</span>
<span class="t" id="t39" style="left:21px;top:459.80px;font-size:8px;line-height:9.60px;color:#fff;font-weight:400;transform:scaleX(0.8320);">Error List</span>
<span class="t" id="t40" style="left:55px;top:459.80px;font-size:8px;line-height:9.60px;color:#fff;font-weight:400;transform:scaleX(0.9327);">Output</span>
<span class="t" id="t41" style="left:84.4px;top:459.80px;font-size:8px;line-height:9.60px;color:#fff;font-weight:400;transform:scaleX(0.8134);">Find Results 1</span>
<span class="t" id="t42" style="left:134px;top:459.80px;font-size:8px;line-height:9.60px;color:#fff;font-weight:400;transform:scaleX(0.8417);">Find Symbol Results</span>
<span class="t" id="t43" style="left:203px;top:459.80px;font-size:8px;line-height:9.60px;color:#fff;font-weight:400;transform:scaleX(0.8845);">Mapping Details</span>
<span class="t" id="t44" style="left:6px;top:476.80px;font-size:8px;line-height:9.60px;color:#fff;font-weight:400;transform:scaleX(0.7784);">Ready</span>
<span class="t" id="t45" style="left:89.7px;top:133.06px;font-size:7.9px;line-height:9.48px;color:#fff;font-weight:700;transform:scaleX(0.8272);">Student</span>
<span class="t" id="t46" style="left:84px;top:155.70px;font-size:8px;line-height:9.60px;color:#1e1e1e;font-weight:400;transform:scaleX(0.8500);">Properties</span>
<span class="t" id="t47" style="left:94.5px;top:167.60px;font-size:8px;line-height:9.60px;color:#1e1e1e;font-weight:400;transform:scaleX(0.8125);">ID</span>
<span class="t" id="t48" style="left:94.5px;top:178.60px;font-size:8px;line-height:9.60px;color:#1e1e1e;font-weight:400;transform:scaleX(0.8500);">LastName</span>
<span class="t" id="t49" style="left:94.5px;top:189.60px;font-size:8px;line-height:9.60px;color:#1e1e1e;font-weight:400;transform:scaleX(0.8738);">FirstMidName</span>
<span class="t" id="t50" style="left:94.5px;top:200.60px;font-size:8px;line-height:9.60px;color:#1e1e1e;font-weight:400;transform:scaleX(0.8796);">EnrollmentDate</span>
<span class="t" id="t51" style="left:84px;top:213.70px;font-size:8px;line-height:9.60px;color:#1e1e1e;font-weight:400;transform:scaleX(0.8760);">Navigation Properties</span>
<span class="t" id="t52" style="left:94.5px;top:226.50px;font-size:8px;line-height:9.60px;color:#1e1e1e;font-weight:400;transform:scaleX(0.8639);">Enrollments</span>
<span class="t" id="t53" style="left:210px;top:118.56px;font-size:7.9px;line-height:9.48px;color:#fff;font-weight:700;transform:scaleX(0.8006);">Enrollment</span>
<span class="t" id="t54" style="left:204px;top:142.40px;font-size:8px;line-height:9.60px;color:#1e1e1e;font-weight:400;transform:scaleX(0.8500);">Properties</span>
<span class="t" id="t55" style="left:214.5px;top:153.60px;font-size:8px;line-height:9.60px;color:#1e1e1e;font-weight:400;transform:scaleX(0.8757);">EnrollmentID</span>
<span class="t" id="t56" style="left:214.5px;top:164.60px;font-size:8px;line-height:9.60px;color:#1e1e1e;font-weight:400;transform:scaleX(0.8433);">CourseID</span>
<span class="t" id="t57" style="left:214.5px;top:175.60px;font-size:8px;line-height:9.60px;color:#1e1e1e;font-weight:400;transform:scaleX(0.8573);">StudentID</span>
<span class="t" id="t58" style="left:214.5px;top:186.60px;font-size:8px;line-height:9.60px;color:#1e1e1e;font-weight:400;transform:scaleX(0.8545);">Grade</span>
<span class="t" id="t59" style="left:204px;top:199.50px;font-size:8px;line-height:9.60px;color:#1e1e1e;font-weight:400;transform:scaleX(0.8760);">Navigation Properties</span>
<span class="t" id="t60" style="left:214.5px;top:212.40px;font-size:8px;line-height:9.60px;color:#1e1e1e;font-weight:400;transform:scaleX(0.8334);">Course</span>
<span class="t" id="t61" style="left:214.5px;top:223.80px;font-size:8px;line-height:9.60px;color:#1e1e1e;font-weight:400;transform:scaleX(0.8884);">Student</span>
<span class="t" id="t62" style="left:330px;top:133.00px;font-size:8px;line-height:9.60px;color:#fff;font-weight:400;transform:scaleX(0.7947);">Course</span>
<span class="t" id="t63" style="left:324px;top:155.90px;font-size:8px;line-height:9.60px;color:#1e1e1e;font-weight:400;transform:scaleX(0.8500);">Properties</span>
<span class="t" id="t64" style="left:335px;top:167.80px;font-size:8px;line-height:9.60px;color:#1e1e1e;font-weight:400;transform:scaleX(0.8285);">CourseID</span>
<span class="t" id="t65" style="left:335px;top:178.80px;font-size:8px;line-height:9.60px;color:#1e1e1e;font-weight:400;transform:scaleX(0.8767);">Title</span>
<span class="t" id="t66" style="left:335px;top:189.20px;font-size:8px;line-height:9.60px;color:#1e1e1e;font-weight:400;transform:scaleX(0.8286);">Credits</span>
<span class="t" id="t67" style="left:324px;top:203.20px;font-size:8px;line-height:9.60px;color:#1e1e1e;font-weight:400;transform:scaleX(0.8760);">Navigation Properties</span>
<span class="t" id="t68" style="left:335px;top:216.00px;font-size:8px;line-height:9.60px;color:#1e1e1e;font-weight:400;transform:scaleX(0.8521);">Enrollments</span>
<span class="t" id="t69" style="left:161.6px;top:188.90px;font-size:6.5px;line-height:7.80px;color:#1e1e1e;font-weight:700;transform:scaleX(0.6345);">1</span>
<span class="t" id="t70" style="left:183px;top:188.00px;font-size:7.5px;line-height:9.00px;color:#1e1e1e;font-weight:700;transform:scaleX(1.0267);">*</span>
<span class="t" id="t71" style="left:280.4px;top:184.10px;font-size:7.5px;line-height:9.00px;color:#1e1e1e;font-weight:700;transform:scaleX(1.0267);">*</span>
<span class="t" id="t72" style="left:304px;top:185.60px;font-size:6.5px;line-height:7.80px;color:#1e1e1e;font-weight:700;transform:scaleX(0.6345);">1</span>
<span class="t v" id="v0" style="left:17.34px;top:54.6px;font-size:7.9px;line-height:9.48px;color:#fff;transform-origin:0 0;transform:rotate(90deg) scaleX(0.8153);">Server Explorer</span>
<span class="t v" id="v1" style="left:17.34px;top:107px;font-size:7.9px;line-height:9.48px;color:#fff;transform-origin:0 0;transform:rotate(90deg) scaleX(0.8933);">Toolbox</span>
<span class="t v" id="v2" style="left:17.34px;top:138.6px;font-size:7.9px;line-height:9.48px;color:#fff;transform-origin:0 0;transform:rotate(90deg) scaleX(0.8410);">SQL Server Object Explorer</span>
<span class="t v" id="v3" style="left:593.74px;top:55.2px;font-size:7.9px;line-height:9.48px;color:#fff;transform-origin:0 0;transform:rotate(90deg) scaleX(0.8452);">Properties</span>
</div>
</body></html>
